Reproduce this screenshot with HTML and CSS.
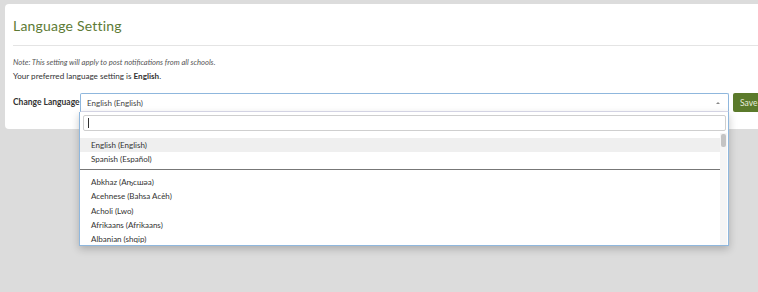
FILE: index.html
```html
<!DOCTYPE html>
<html lang="en">
<head>
    <meta charset="UTF-8">
    <meta name="viewport" content="width=device-width, initial-scale=1.0">
    <title>Language Setting</title>
    <link rel="stylesheet" href="styles.css">
</head>
<body>
    <div class="page">
        <div class="card">
            <h1 class="title">Language Setting</h1>
            <div class="rule"></div>
            <p class="note">Note: This setting will apply to post notifications from all schools.</p>
            <p class="current">Your preferred language setting is <b>English</b>.</p>
            <div class="row">
                <label class="label">Change Language</label>
                <div class="select-wrap">
                    <div class="select">
                        <span class="select-text">English (English)</span>
                        <span class="caret"></span>
                    </div>
                    <!-- open dropdown menu -->
                    <div class="dropdown">
                        <div class="search"><span class="cursor"></span></div>
                        <div class="results">
                            <ul class="list">
                                <li class="opt active">English (English)</li>
                                <li class="opt">Spanish (Español)</li>
                                <li class="sep"></li>
                                <li class="opt">Abkhaz (Аҧсшәа)</li>
                                <li class="opt">Acehnese (Bahsa Acèh)</li>
                                <li class="opt">Acholi (Lwo)</li>
                                <li class="opt">Afrikaans (Afrikaans)</li>
                                <li class="opt">Albanian (shqip)</li>
                            </ul>
                            <div class="scrollbar"><div class="thumb"></div></div>
                        </div>
                    </div>
                </div>
                <button class="save">Save</button>
            </div>
        </div>
    </div>
</body>
</html>
```

FILE: styles.css
```css
html, body {
    margin: 0;
    height: 100%;
}
body {
    background-color: #dcdcdc;
    font-family: Lato, "Open Sans", Arial, sans-serif;
    color: #333;
    overflow: hidden;
}
.page {
    padding: 4px 0 0 5px;
}
.card {
    background-color: #fff;
    border-radius: 4px 0 0 4px;
    height: 125px;
    margin-right: -30px;
    padding-left: 8px;
    box-sizing: border-box;
}
.title {
    margin: 0;
    padding-top: 12px;
    font-size: 14px;
    line-height: 20px;
    font-weight: 400;
    color: #5d7a35;
    letter-spacing: 0.2px;
}
.rule {
    margin-top: 9px;
    border-top: 1px solid #e4e4e4;
}
.note {
    margin: 12px 0 0;
    font-size: 7.6px;
    line-height: 9px;
    font-style: italic;
    color: #555;
}
.current {
    margin: 4px 0 0;
    font-size: 8.1px;
    line-height: 11px;
    color: #333;
}
.current b {
    font-weight: 700;
}

/*select row*/
.row {
    display: flex;
    align-items: flex-start;
    margin-top: 11px;
}
.label {
    width: 67px;
    font-size: 8.5px;
    font-weight: 700;
    line-height: 19px;
    white-space: nowrap;
    color: #333;
}
.select-wrap {
    position: relative;
    width: 649px;
    z-index: 2;
}
.select {
    height: 19px;
    box-sizing: border-box;
    border: 1px solid #8fb7dd;
    border-bottom-color: #dde;
    border-radius: 2px 2px 0 0;
    background-color: #fff;
    display: flex;
    align-items: center;
    padding: 0 8px 0 6px;
}
.select-text {
    flex: 1;
    font-size: 8px;
    color: #444;
}
.caret {
    width: 0;
    height: 0;
    border-left: 2px solid transparent;
    border-right: 2px solid transparent;
    border-bottom: 2px solid #888;
}
.save {
    margin-left: 4px;
    height: 19px;
    width: 40px;
    border: none;
    border-radius: 2px;
    background-color: #5b7a2b;
    color: #e8eedd;
    font-family: Lato, "Open Sans", Arial, sans-serif;
    font-size: 8.5px;
    text-align: left;
    padding: 0 0 0 7px;
}

/*dropdown menu*/
.dropdown {
    position: absolute;
    top: 19px;
    left: -1px;
    width: 650px;
    height: 134px;
    box-sizing: border-box;
    background-color: #fff;
    border: 1px solid #8fb7dd;
    border-top: none;
    box-shadow: 0 3px 8px rgba(0, 0, 0, 0.22);
    padding: 3px 1px 0 3px;
    overflow: hidden;
}
.search {
    height: 16px;
    box-sizing: border-box;
    border: 1px solid #cfcfcf;
    border-radius: 2px;
    margin-right: 1px;
    display: flex;
    align-items: center;
    padding-left: 4px;
}
.cursor {
    width: 1px;
    height: 10px;
    background-color: #333;
}
.results {
    display: flex;
    height: 115px;
    margin-top: 2px;
    margin-left: -3px;
}
.list {
    list-style: none;
    margin: 0;
    padding: 5px 0 0;
    flex: 1;
}
.opt {
    height: 14.4px;
    line-height: 14.4px;
    padding-left: 11px;
    font-size: 8px;
    color: #333;
    white-space: nowrap;
}
.opt.active {
    background-color: #efefef;
}
.sep {
    height: 0;
    border-top: 1px solid #777;
    margin: 2px 0 5px;
}
.scrollbar {
    width: 7px;
    background-color: #f5f5f5;
    padding-top: 1px;
}
.thumb {
    width: 5px;
    height: 13px;
    margin-left: 1px;
    border-radius: 2px;
    background-color: #c4c4c4;
}
```
